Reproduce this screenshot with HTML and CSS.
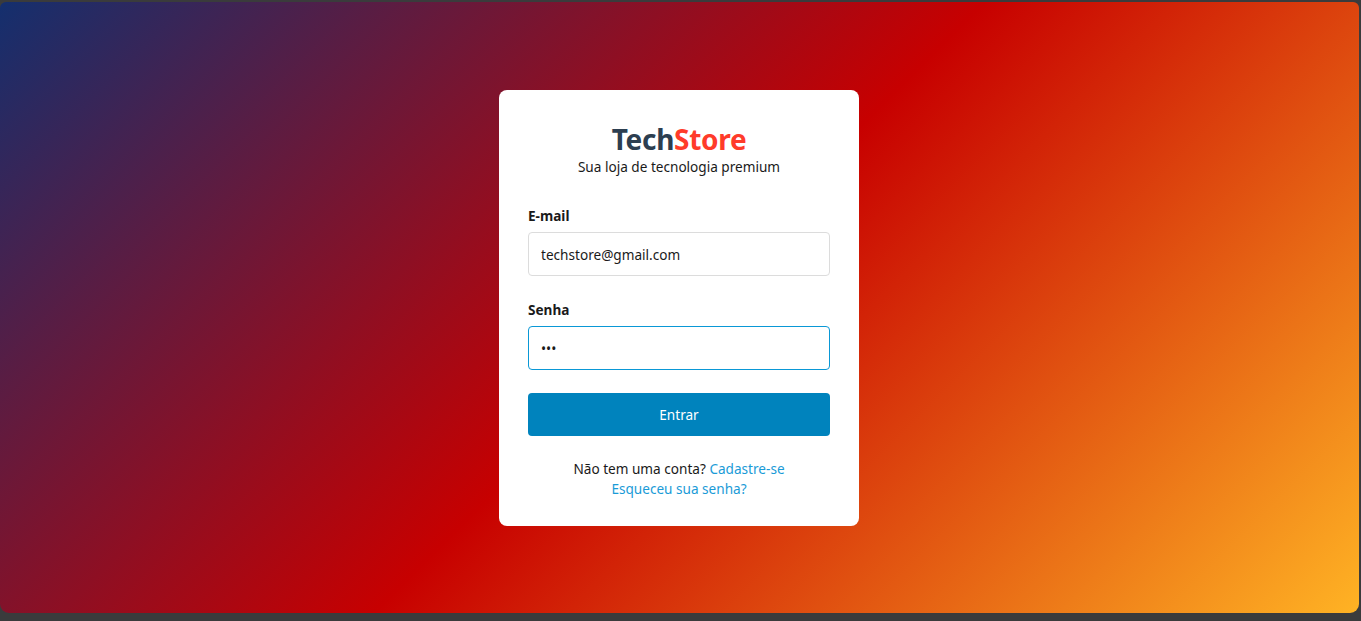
FILE: index.html
```html
<!DOCTYPE html>
<html lang="pt-BR">
<head>
<meta charset="utf-8">
<title>TechStore - Login</title>
<link rel="stylesheet" href="styles.css">
</head>
<body>
<div class="screen">
  <div class="card">
    <div class="brand">
      <h1 class="logo"><span class="logo-tech">Tech</span><span class="logo-store">Store</span></h1>
      <p class="tagline">Sua loja de tecnologia premium</p>
    </div>
    <form class="form">
      <div class="field">
        <label class="label" for="email">E-mail</label>
        <input class="input" id="email" type="email" value="techstore@gmail.com">
      </div>
      <div class="field">
        <label class="label" for="senha">Senha</label>
        <input class="input input-focus" id="senha" type="password" value="123">
      </div>
      <button class="btn" type="button">Entrar</button>
    </form>
    <div class="links">
      <p class="links-line">Não tem uma conta? <a class="link" href="#">Cadastre-se</a></p>
      <p class="links-line"><a class="link" href="#">Esqueceu sua senha?</a></p>
    </div>
  </div>
</div>
</body>
</html>
```
FILE: styles.css
```css
* { box-sizing: border-box; }
html, body { margin: 0; padding: 0; height: 100%; }
body {
  background: #3a3b3c;
  font-family: "Noto Sans", "Open Sans", sans-serif;
  color: #1a1a1a;
}
.screen {
  height: 611px;
  margin: 2px 2px 0 0;
  border-radius: 6px 6px 9px 9px;
  background: linear-gradient(135deg, #142f6e 0%, #c70000 50%, #ffb324 100%);
  display: flex;
  justify-content: center;
  padding: 88px 1px 0 0;
}
.card {
  width: 360px;
  height: 436px;
  background: #fff;
  border-radius: 8px;
  padding: 32px 29px 0;
}
.brand { text-align: center; }
.logo {
  margin: 0;
  font-size: 28px;
  line-height: 34px;
  font-weight: 700;
  letter-spacing: -0.3px;
}
.logo-tech { color: #2c3e50; }
.logo-store { color: #ff3b2a; }
.tagline {
  margin: 1px 0 0;
  font-size: 13.6px;
  line-height: 20px;
  color: #1a1a1a;
}
.form { margin-top: 29px; }
.field + .field { margin-top: 24px; }
.label {
  display: block;
  font-size: 13.6px;
  font-weight: 700;
  line-height: 20px;
  margin-bottom: 6px;
  color: #1a1a1a;
}
.input {
  display: block;
  width: 100%;
  height: 44px;
  border: 1px solid #dcdcdc;
  border-radius: 4px;
  padding: 0 12px;
  font-family: inherit;
  font-size: 13.6px;
  color: #1a1a1a;
  outline: none;
  background: #fff;
}
.input-focus { border-color: #0a98d6; }
.btn {
  display: block;
  width: 100%;
  height: 43px;
  margin-top: 23px;
  border: none;
  border-radius: 4px;
  background: #0083bd;
  color: #fff;
  font-family: inherit;
  font-size: 13.6px;
}
.links {
  margin-top: 23px;
  text-align: center;
  font-size: 13.6px;
  line-height: 20px;
}
.links-line { margin: 0; }
.link { color: #1a9bd7; text-decoration: none; }
```
